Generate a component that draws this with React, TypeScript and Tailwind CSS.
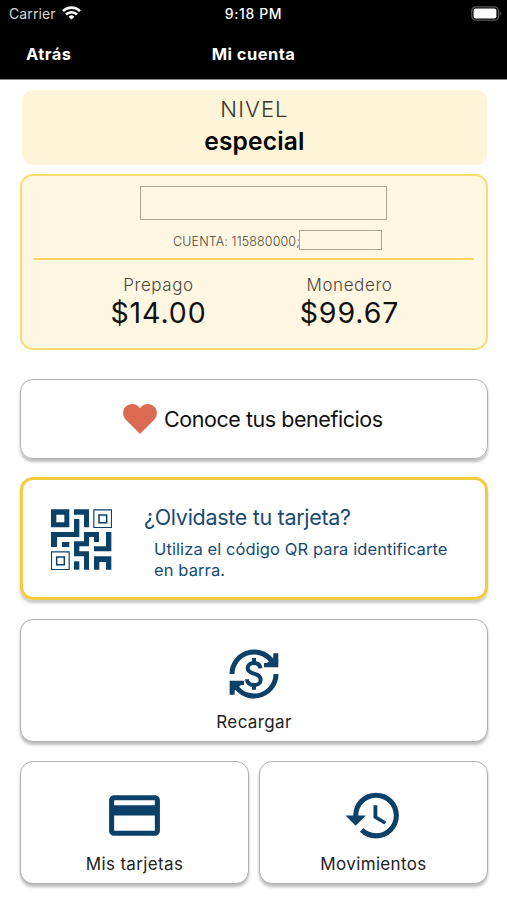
import { ReactNode } from 'react';
import { MdCreditCard, MdHistory } from 'react-icons/md';

function WifiIcon() {
  return (
    <svg width="19" height="14" viewBox="0 0 19 14" fill="none" stroke="white" strokeWidth="2.6">
      <path d="M1 5.2a12 12 0 0 1 17 0" />
      <path d="M4 8.5a7.8 7.8 0 0 1 11 0" />
      <path d="M9.5 13.6 6.6 10.7a4.1 4.1 0 0 1 5.8 0z" fill="white" stroke="none" />
    </svg>
  );
}

function BatteryIcon() {
  return (
    <svg width="31" height="16" viewBox="0 0 31 16">
      <rect x="0.8" y="0.8" width="26.6" height="13.4" rx="4" fill="none" stroke="#58585a" strokeWidth="1.3" />
      <rect x="2.6" y="2.6" width="22.8" height="9.8" rx="2" fill="white" />
      <path d="M28.7 5.2c2 .6 2 4 0 4.6z" fill="#58585a" />
    </svg>
  );
}

function HeartIcon() {
  return (
    <svg width="34" height="30" viewBox="0 0 34 30" fill="#dc6951">
      <path d="M17 30 2.6 15.4C-.6 12-.7 6.3 2.4 3 6-.9 12.6-1 16 3l1 1.2L18 3c3.4-4 10-3.9 13.6 0 3.1 3.3 3 9-.2 12.4z" />
    </svg>
  );
}

function QrIcon() {
  return (
    <svg width="61" height="61" viewBox="123 116 183 183" fill="#0b4069">
      <path fillRule="evenodd" d="M123 117h55v54h-55zM139 133v23h24v-23z" />
      <path d="M192 117h45v54h-15v-38h-30z" />
      <path d="M192 146h16v54h-67v30h-18v-45h69z" />
      <path d="M156 215h22v15h-22z" />
      <path d="M222 185h45v30h-15v-15h-15v28h-29v15h29v55h-15v-40h-30v-45h30z" />
      <path d="M288 185h16v58h-52v-15h36z" />
      <path d="M192 273h16v25h-16z" />
      <path d="M252 258h52v40h-16v-23h-20v23h-16z" />
      <g fill="none" stroke="#0b4069" strokeWidth="3.5">
        <path d="M251.5 118.5h53v53h-53z" />
        <path d="M267 134h23v23h-23z" strokeWidth="4.5" />
        <path d="M124.5 244.5h53v53h-53z" />
        <path d="M140 260h23v23h-23z" strokeWidth="4.5" />
      </g>
    </svg>
  );
}

function RechargeIcon() {
  return (
    <svg width="50" height="50" viewBox="0 0 150 150" fill="none" stroke="#0b4069" strokeWidth="15">
      <path d="M9 75A66 66 0 0 1 126 33" />
      <path d="M141 75A66 66 0 0 1 24 117" />
      <path d="M148 13v42h-43V42h9l19-17V13z" fill="#0b4069" stroke="none" />
      <path d="M2 137V95h43v13h-9l-19 17v12z" fill="#0b4069" stroke="none" />
      <path d="M94 58c-1-11-9-16-19-16-11 0-19 6-19 16 0 10 9 13 19 16 11 3 20 7 20 18 0 10-9 16-20 16S54 102 54 91" strokeWidth="12" />
      <path d="M75 27v15M75 107v15" strokeWidth="12" />
    </svg>
  );
}

function Tile({ icon, label }: { icon: ReactNode; label: string }) {
  return (
    <button className="flex h-[123px] w-full flex-col items-center rounded-[13px] border border-[#b0b0b0] bg-white pt-[23px] font-[Inter] text-[17px] tracking-[0.35px] text-[#222] shadow-[0_3px_3px_rgba(0,0,0,0.26)]">
      <span className="flex h-[61px] items-center justify-center">{icon}</span>
      <span className="mt-[8px] leading-5 whitespace-nowrap">{label}</span>
    </button>
  );
}

function Balance({ label, amount }: { label: string; amount: string }) {
  return (
    <div className="flex w-[191px] flex-col items-center">
      <span className="text-[17px] leading-5 font-light tracking-[0.6px] text-[#4a463c]">{label}</span>
      <span className="mt-[2px] text-[28.5px] leading-8 tracking-[0.9px] text-[#111]">{amount}</span>
    </div>
  );
}

export default function App() {
  return (
    <div className="h-[900px] w-[507px] overflow-hidden bg-white font-[Inter,sans-serif]">
      <header className="h-[80px] border-b border-[#888] bg-black text-white">
        <div className="grid h-7 grid-cols-3 items-center px-[9px]">
          <div className="-mt-[2px] flex items-center gap-[6px] text-[#d8d8d8]">
            <span className="text-[14px] tracking-[0.1px]">Carrier</span>
            <WifiIcon />
          </div>
          <span className="-mt-px text-center text-[14px] font-medium tracking-[0.6px] whitespace-nowrap">9:18 PM</span>
          <div className="-mr-[4px] flex justify-end">
            <BatteryIcon />
          </div>
        </div>
        <div className="grid grid-cols-3 items-center px-[26px] pt-[14px] text-[16.5px] leading-6 font-bold tracking-[0.45px]">
          <span>Atrás</span>
          <span className="text-center whitespace-nowrap">Mi cuenta</span>
        </div>
      </header>

      <main className="px-[20px] pt-[10px]">
        <section className="mx-[2px] flex h-[75px] w-[465px] flex-col items-center rounded-[11px] bg-[#fef4d8] pt-[5px]">
          <span className="text-[22px] leading-7 font-light tracking-[1.1px] text-[#39352b]">NIVEL</span>
          <span className="mt-[2px] text-[24.5px] leading-8 font-semibold tracking-[0.2px] text-black">especial</span>
        </section>

        <section className="mt-[9px] h-[176px] w-[468px] rounded-[13px] border-2 border-[#f6dc72] bg-[#fff7e1] px-3 pt-[10px]">
          <div className="ml-[106px] h-[34px] w-[247px] border border-[#aaa58f]" />
          <div className="mt-[10px] ml-[139px] flex h-5 items-center">
            <span className="w-[126px] overflow-hidden pt-[3px] text-[12.5px] leading-5 font-light tracking-[0.13px] whitespace-nowrap text-[#4a463c]">
              CUENTA: 115880000;
            </span>
            <div className="h-5 w-[83px] border border-[#aaa58f]" />
          </div>
          <div className="mt-2 h-[2px] w-[440px] bg-[#fbd75f]" />
          <div className="mt-[15px] ml-[29px] flex">
            <Balance label="Prepago" amount="$14.00" />
            <Balance label="Monedero" amount="$99.67" />
          </div>
        </section>

        <button className="mt-[29px] flex h-[80px] w-[468px] items-center rounded-[13px] border border-[#b0b0b0] pl-[102px] shadow-[0_3px_3px_rgba(0,0,0,0.26)]">
          <HeartIcon />
          <span className="ml-[7px] text-[21.5px] tracking-[-0.45px] whitespace-nowrap text-[#111]">Conoce tus beneficios</span>
        </button>

        <button className="mt-[18px] flex h-[123px] w-[468px] items-start rounded-[13px] border-[3px] border-[#f2cc3d] pt-[29px] pl-[28px] text-left text-[#174a72] shadow-[0_3px_3px_rgba(0,0,0,0.22)]">
          <QrIcon />
          <div className="-mt-[6px] ml-[32px]">
            <p className="text-[21.5px] leading-7 tracking-[-0.3px]">¿Olvidaste tu tarjeta?</p>
            <p className="mt-[8px] ml-[10px] w-[310px] text-[16.5px] leading-[20.5px] tracking-[0.1px]">
              Utiliza el código QR para identificarte
              <br />
              en barra.
            </p>
          </div>
        </button>

        <div className="mt-[19px] w-[468px]">
          <Tile icon={<RechargeIcon />} label="Recargar" />
        </div>
        <div className="mt-[19px] grid w-[468px] grid-cols-2 gap-[10px]">
          <Tile icon={<MdCreditCard size={61} color="#0b4069" />} label="Mis tarjetas" />
          <Tile icon={<MdHistory size={61} color="#0b4069" />} label="Movimientos" />
        </div>
      </main>
    </div>
  );
}
